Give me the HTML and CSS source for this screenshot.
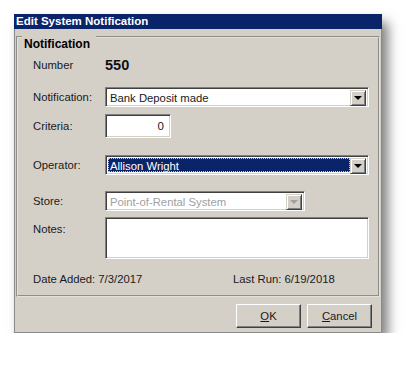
FILE: index.html
```html
<!DOCTYPE html>
<html lang="en">
  <head>
    <meta charset="UTF-8" />
    <meta name="viewport" content="width=device-width, initial-scale=1.0" />
    <title>Edit System Notification</title>
    <link rel="stylesheet" href="styles.css">
  </head>
  <body>
    <div class="dialog">
      <div class="titlebar">Edit System Notification</div>

      <div class="dialog-body">
        <!-- Notification group box -->
        <div class="group">
          <div class="group-title">Notification</div>

          <div class="fields">
            <div class="row row-number">
              <span class="label">Number</span>
              <span class="number">550</span>
            </div>

            <div class="row row-notif">
              <span class="label">Notification:</span>
              <div class="combo combo-wide">
                <span class="combo-value">Bank Deposit made</span>
                <span class="combo-btn"><span class="arrow"></span></span>
              </div>
            </div>

            <div class="row row-criteria">
              <span class="label">Criteria:</span>
              <div class="textbox criteria">0</div>
            </div>

            <div class="row row-operator">
              <span class="label">Operator:</span>
              <div class="combo combo-wide">
                <span class="combo-value selected">Allison Wright</span>
                <span class="combo-btn"><span class="arrow"></span></span>
              </div>
            </div>

            <div class="row row-store">
              <span class="label">Store:</span>
              <div class="combo combo-store disabled">
                <span class="combo-value">Point-of-Rental System</span>
                <span class="combo-btn"><span class="arrow"></span></span>
              </div>
            </div>

            <div class="row row-notes">
              <span class="label">Notes:</span>
              <div class="textbox notes"></div>
            </div>

            <div class="row row-dates">
              <span class="date-added">Date Added: 7/3/2017</span>
              <span>Last Run: 6/19/2018</span>
            </div>
          </div>
        </div>

        <!-- Dialog buttons -->
        <div class="buttons">
          <button class="btn"><u>O</u>K</button>
          <button class="btn"><u>C</u>ancel</button>
        </div>
      </div>
    </div>
  </body>
</html>
```

FILE: styles.css
```css
/* Global Styles */
* {
  margin: 0;
  padding: 0;
  box-sizing: border-box;
}

body {
  font-family: "Liberation Sans", Arial, sans-serif;
  font-size: 11.3px;
  color: #1a1a1a;
  background: #fff;
}

/* Dialog window */
.dialog {
  width: 368px;
  height: 319px;
  margin: 14px 0 0 14px;
  display: flex;
  flex-direction: column;
  background: #d4d0c8;
  box-shadow: 6px 8px 11px rgba(0, 0, 0, 0.5);
}

.titlebar {
  height: 15px;
  line-height: 15px;
  padding-left: 2px;
  background: #0a246a;
  color: #fff;
  font-weight: bold;
  font-size: 11.5px;
}

.dialog-body {
  flex: 1;
  border: 1px solid #8a8a8a;
  border-top: none;
  padding-top: 7px;
}

/* Group box */
.group {
  margin: 0 1px 0 1px;
  border: 2px groove #e4e1da;
  padding-bottom: 8px;
}

.group-title {
  display: inline-block;
  margin: -6px 0 0 4px;
  padding: 0 6px 0 2px;
  line-height: 16px;
  font-size: 12px;
  font-weight: bold;
  color: #000;
  background: #d4d0c8;
}

.fields {
  padding-left: 15px;
}

.row {
  display: flex;
  align-items: center;
}

.label {
  width: 72px;
  flex: none;
}

.row-number {
  height: 20px;
  margin-top: 3px;
}

.number {
  font-size: 14.5px;
  font-weight: bold;
  color: #111;
}

.row-notif {
  margin-top: 12px;
}

.row-criteria {
  margin-top: 7px;
}

.row-operator {
  margin-top: 17px;
}

.row-store {
  margin-top: 16px;
}

.row-notes {
  margin-top: 6px;
  align-items: flex-start;
}

.row-notes .label {
  padding-top: 6px;
}

.row-dates {
  height: 16px;
  margin-top: 12px;
}

.date-added {
  width: 200px;
}

/* Sunken fields */
.combo,
.textbox {
  background: #fff;
  border: 1px solid;
  border-color: #808080 #fff #fff #808080;
  box-shadow: inset 1px 1px 0 #404040, inset -1px -1px 0 #d4d0c8;
}

.combo {
  display: flex;
  height: 20px;
  padding: 2px;
}

.combo-wide {
  width: 264px;
}

.combo-store {
  width: 200px;
}

.combo-value {
  flex: 1;
  padding-left: 2px;
  line-height: 16px;
  white-space: nowrap;
  overflow: hidden;
}

.combo-value.selected {
  background: #0a246a;
  color: #fff;
  outline: 1px dotted #d8c890;
  outline-offset: -1px;
}

.combo-btn {
  width: 16px;
  height: 16px;
  display: flex;
  justify-content: center;
  align-items: center;
  background: #d4d0c8;
  border: 1px solid;
  border-color: #d4d0c8 #404040 #404040 #d4d0c8;
  box-shadow: inset 1px 1px 0 #fff, inset -1px -1px 0 #808080;
}

.arrow {
  width: 0;
  height: 0;
  border-left: 4px solid transparent;
  border-right: 4px solid transparent;
  border-top: 4px solid #000;
}

.combo.disabled .combo-value {
  color: #a0a0a0;
}

.combo.disabled .arrow {
  border-top-color: #a0a0a0;
}

.criteria {
  width: 66px;
  height: 24px;
  padding-right: 6px;
  text-align: right;
  line-height: 22px;
  font-size: 11.5px;
}

.notes {
  width: 264px;
  height: 42px;
}

/* Buttons */
.buttons {
  display: flex;
  justify-content: flex-end;
  gap: 6px;
  padding: 7px 9px 0 0;
}

.btn {
  width: 65px;
  height: 24px;
  font-family: inherit;
  font-size: 11.3px;
  color: #1a1a1a;
  background: #d4d0c8;
  border: 1px solid;
  border-color: #fff #404040 #404040 #fff;
  box-shadow: inset -1px -1px 0 #808080;
}
```
